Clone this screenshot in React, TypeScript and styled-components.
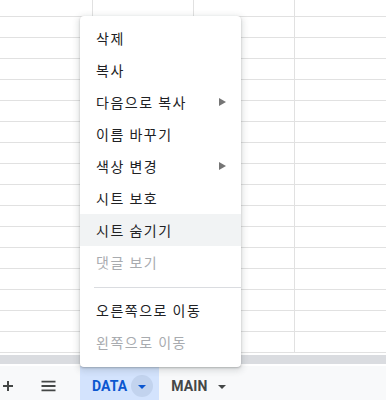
import React from 'react'
import styled, { createGlobalStyle } from 'styled-components'

const GlobalStyle = createGlobalStyle`
  html, body {
    margin: 0;
    padding: 0;
    background: #ffffff;
    overflow: hidden;
  }
  body {
    font-family: Roboto, 'Noto Sans CJK KR', sans-serif;
  }
`

type MenuEntry =
  | { kind: 'item'; label: string; submenu?: boolean; disabled?: boolean; active?: boolean }
  | { kind: 'sep' }

const entries: MenuEntry[] = [
  { kind: 'item', label: '삭제' },
  { kind: 'item', label: '복사' },
  { kind: 'item', label: '다음으로 복사', submenu: true },
  { kind: 'item', label: '이름 바꾸기' },
  { kind: 'item', label: '색상 변경', submenu: true },
  { kind: 'item', label: '시트 보호' },
  { kind: 'item', label: '시트 숨기기', active: true },
  { kind: 'item', label: '댓글 보기', disabled: true },
  { kind: 'sep' },
  { kind: 'item', label: '오른쪽으로 이동' },
  { kind: 'item', label: '왼쪽으로 이동', disabled: true },
]

const App = () => {
  const cells = Array.from({ length: 17 * 4 })
  return (
    <Page>
      <GlobalStyle />
      <Sheet>
        {cells.map((_, i) => (
          <Cell key={i} />
        ))}
      </Sheet>
      <ScrollTrack>
        <Thumb />
      </ScrollTrack>
      <TabBar>
        <IconButton size={16} aria-label="add sheet">
          <svg width="12" height="12" viewBox="0 0 12 12">
            <path d="M6 1v10M1 6h10" stroke="#444746" strokeWidth="2" fill="none" />
          </svg>
        </IconButton>
        <IconButton size={64} aria-label="all sheets">
          <svg width="15" height="12" viewBox="0 0 15 12">
            <path d="M0.5 1.7h14M0.5 6h14M0.5 10.3h14" stroke="#444746" strokeWidth="1.8" fill="none" />
          </svg>
        </IconButton>
        <Tab active>
          <TabLabel active>DATA</TabLabel>
          <TabCaret active>
            <DownTriangle color="#0b57d0" />
          </TabCaret>
        </Tab>
        <Tab>
          <TabLabel>MAIN</TabLabel>
          <TabCaret>
            <DownTriangle color="#444746" />
          </TabCaret>
        </Tab>
      </TabBar>

      <Menu>
        {entries.map((e, i) =>
          e.kind === 'sep' ? (
            <Separator key={i} />
          ) : (
            <MenuItem key={i} active={e.active} disabled={e.disabled}>
              <span>{e.label}</span>
              {e.submenu && <SubArrow />}
            </MenuItem>
          )
        )}
      </Menu>
    </Page>
  )
}

const Page = styled.div`
  position: relative;
  width: 386px;
  height: 400px;
  overflow: hidden;
  background: #ffffff;
`

const Sheet = styled.div`
  display: grid;
  grid-template-columns: 92px repeat(3, 100px);
  grid-template-rows: 16px repeat(16, 20px);
  gap: 1px;
  background: #e1e1e1;
  border-bottom: 1px solid #e1e1e1;
  width: 395px;
`

const Cell = styled.div`
  background: #ffffff;
`

const ScrollTrack = styled.div`
  padding: 2px 0 2px;
  background: #ffffff;
`

const Thumb = styled.div`
  height: 9px;
  background: #dadce0;
`

const TabBar = styled.div`
  display: flex;
  align-items: center;
  height: 40px;
  background: #f8f9fa;
  font-family: Roboto, sans-serif;
`

const IconButton = styled.div<{ size: number }>`
  display: flex;
  align-items: center;
  justify-content: center;
  flex: 0 0 ${(p) => p.size}px;
  height: 100%;
`

const Tab = styled.div<{ active?: boolean }>`
  display: flex;
  align-items: center;
  height: 100%;
  padding: 0 6px 0 12px;
  gap: 4px;
  background: ${(p) => (p.active ? '#d3e3fd' : 'transparent')};
`

const TabLabel = styled.span<{ active?: boolean }>`
  font-size: 14px;
  font-weight: 700;
  letter-spacing: 0.1px;
  color: ${(p) => (p.active ? '#0b57d0' : '#444746')};
`

const TabCaret = styled.span<{ active?: boolean }>`
  display: flex;
  align-items: center;
  justify-content: center;
  width: 22px;
  height: 22px;
  border-radius: 50%;
  background: ${(p) => (p.active ? '#c2d3ee' : 'transparent')};
`

const DownTriangle = styled.span<{ color: string }>`
  width: 0;
  height: 0;
  border-left: 4.5px solid transparent;
  border-right: 4.5px solid transparent;
  border-top: 4.5px solid ${(p) => p.color};
  margin-top: 2px;
`

const Menu = styled.div`
  position: absolute;
  left: 80px;
  top: 16px;
  width: 161px;
  padding: 6px 0 9px;
  background: #ffffff;
  border-radius: 4px;
  box-shadow: 0 2px 6px 2px rgba(60, 64, 67, 0.15), 0 1px 2px rgba(60, 64, 67, 0.3);
  font-family: 'Noto Sans CJK KR', 'Noto Sans', sans-serif;
`

const MenuItem = styled.div<{ active?: boolean; disabled?: boolean }>`
  display: flex;
  align-items: center;
  justify-content: space-between;
  height: 32px;
  padding: 0 15px 0 16px;
  font-size: 14px;
  letter-spacing: 1.5px;
  color: ${(p) => (p.disabled ? '#a8abaf' : '#202124')};
  background: ${(p) => (p.active ? '#f1f3f4' : 'transparent')};
`

const SubArrow = styled.span`
  width: 0;
  height: 0;
  border-top: 4px solid transparent;
  border-bottom: 4px solid transparent;
  border-left: 7px solid #757575;
`

const Separator = styled.div`
  height: 1px;
  margin: 9px 0 6px 14px;
  background: #dadce0;
`

export default App
